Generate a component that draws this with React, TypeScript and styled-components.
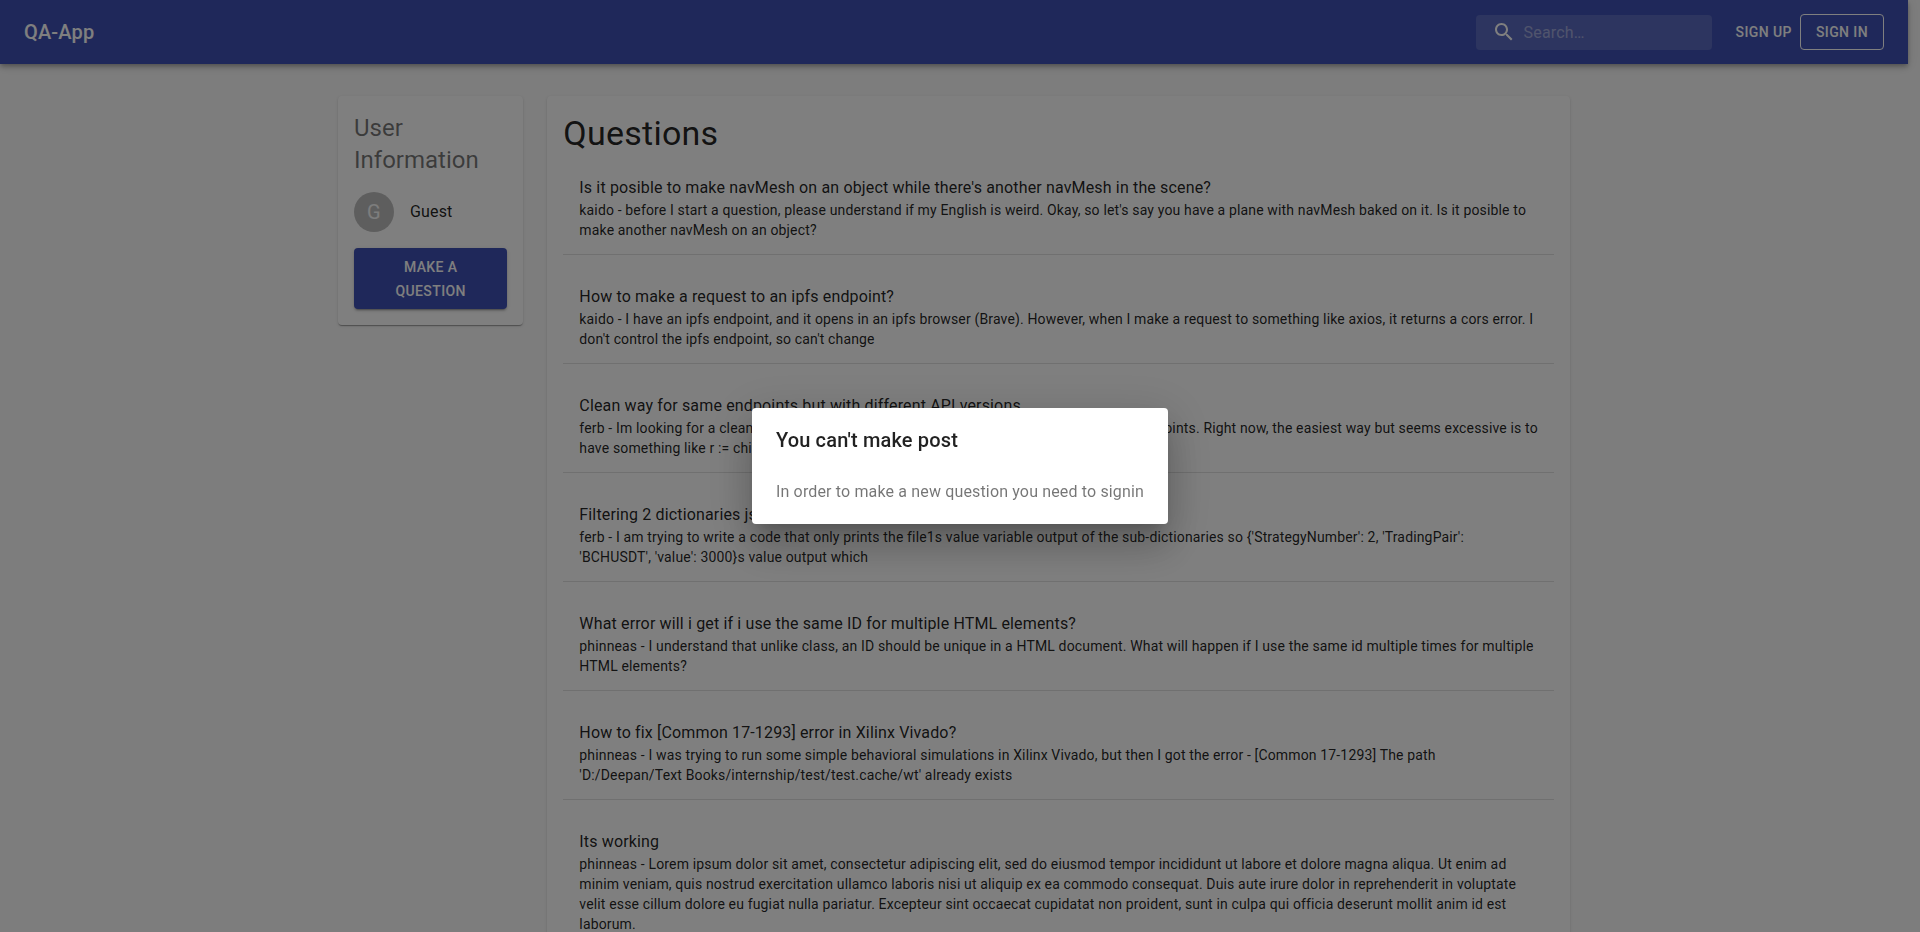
import React from "react";
import styled, { createGlobalStyle, css } from "styled-components";

const GlobalStyle = createGlobalStyle`
  *, *::before, *::after { box-sizing: border-box; }
  body {
    margin: 0;
    background: #fafafa;
    color: rgba(0, 0, 0, 0.87);
    font-family: Roboto, "Helvetica Neue", Arial, sans-serif;
    font-size: 16px;
    line-height: 24px;
    letter-spacing: 0.00938em;
    -webkit-font-smoothing: antialiased;
  }
`;

/* Scrolling is locked while the dialog is open; the padding keeps the scrollbar's room. */
const Page = styled.div`
  height: 100vh;
  overflow: hidden;
  padding-right: 12px;
`;

const AppBar = styled.header`
  position: relative;
  display: flex;
  align-items: center;
  min-height: 64px;
  padding: 0 24px;
  background: #3f51b5;
  color: #fff;
  box-shadow: 0 2px 4px -1px rgba(0, 0, 0, 0.2), 0 4px 5px 0 rgba(0, 0, 0, 0.14),
    0 1px 10px 0 rgba(0, 0, 0, 0.12);
`;

const Brand = styled.a`
  flex: 1;
  color: inherit;
  text-decoration: none;
  font-size: 20px;
  font-weight: 500;
  line-height: 32px;
  letter-spacing: 0.0075em;
`;

const SearchBox = styled.label`
  display: flex;
  align-items: center;
  gap: 8px;
  width: 236px;
  height: 35px;
  margin-right: 16px;
  padding-left: 16px;
  border-radius: 4px;
  background: rgba(255, 255, 255, 0.15);
`;

const SearchSvg = styled.svg`
  flex: none;
  width: 24px;
  height: 24px;
  fill: currentColor;
`;

const SearchInput = styled.input`
  flex: 1;
  min-width: 0;
  height: 100%;
  padding: 0;
  border: 0;
  outline: 0;
  background: transparent;
  color: inherit;
  font: inherit;
  letter-spacing: inherit;
  &::placeholder {
    color: currentColor;
    opacity: 0.42;
  }
`;

type Variant = "text" | "outlined" | "contained";

const variants = {
  text: css`
    padding: 6px 8px;
    background: transparent;
    color: inherit;
  `,
  outlined: css`
    padding: 5px 15px;
    border: 1px solid currentColor;
    background: transparent;
    color: inherit;
  `,
  contained: css`
    width: 100%;
    min-height: 61px;
    padding: 6px 16px;
    background: #3f51b5;
    color: #fff;
    box-shadow: 0 3px 1px -2px rgba(0, 0, 0, 0.2), 0 2px 2px 0 rgba(0, 0, 0, 0.14),
      0 1px 5px 0 rgba(0, 0, 0, 0.12);
  `,
};

const Button = styled.button<{ $variant: Variant }>`
  min-width: 64px;
  border: 0;
  border-radius: 4px;
  font-family: inherit;
  font-size: 14px;
  font-weight: 500;
  line-height: 24px;
  letter-spacing: 0.02857em;
  text-transform: uppercase;
  cursor: pointer;
  ${({ $variant }) => variants[$variant]}
`;

const Container = styled.main`
  display: grid;
  grid-template-columns: repeat(12, minmax(0, 1fr));
  align-items: start;
  gap: 24px;
  max-width: 1280px;
  margin: 32px auto 0;
  padding: 0 24px;
`;

const Paper = styled.section<{ $span: number }>`
  grid-column: span ${({ $span }) => $span};
  padding: 16px;
  border-radius: 4px;
  background: #fff;
  box-shadow: 0 2px 1px -1px rgba(0, 0, 0, 0.2), 0 1px 1px 0 rgba(0, 0, 0, 0.14),
    0 1px 3px 0 rgba(0, 0, 0, 0.12);
`;

const UserPanel = styled(Paper)`
  display: flex;
  flex-direction: column;
  gap: 16px;
`;

const PanelTitle = styled.h2`
  margin: 0;
  color: rgba(0, 0, 0, 0.54);
  font-size: 24px;
  font-weight: 400;
  line-height: 32px;
  letter-spacing: 0;
`;

const UserRow = styled.div`
  display: flex;
  align-items: center;
  gap: 16px;
`;

const Avatar = styled.span`
  display: flex;
  align-items: center;
  justify-content: center;
  width: 40px;
  height: 40px;
  border-radius: 50%;
  background: #bdbdbd;
  color: #fafafa;
  font-size: 20px;
`;

const Heading = styled.h1`
  margin: 0;
  font-size: 34px;
  font-weight: 400;
  line-height: 42px;
  letter-spacing: 0.00735em;
`;

const QuestionList = styled.ul`
  display: flex;
  flex-direction: column;
  gap: 16px;
  margin: 0;
  padding: 8px 0;
  list-style: none;
`;

const QuestionItem = styled.li`
  border-bottom: 1px solid rgba(0, 0, 0, 0.12);
`;

const QuestionLink = styled.a`
  display: block;
  padding: 14px 16px;
  color: inherit;
  text-decoration: none;
`;

const QuestionTitle = styled.span`
  display: block;
`;

const QuestionBody = styled.p`
  margin: 0;
  font-size: 14px;
  line-height: 20px;
  letter-spacing: 0.01071em;
`;

const Backdrop = styled.div`
  position: fixed;
  inset: 0;
  display: flex;
  align-items: center;
  justify-content: center;
  background: rgba(0, 0, 0, 0.5);
`;

const Dialog = styled.div`
  max-width: 600px;
  margin: 32px;
  border-radius: 4px;
  background: #fff;
  box-shadow: 0 11px 15px -7px rgba(0, 0, 0, 0.2), 0 24px 38px 3px rgba(0, 0, 0, 0.14),
    0 9px 46px 8px rgba(0, 0, 0, 0.12);
`;

const DialogTitle = styled.h2`
  margin: 0;
  padding: 16px 24px;
  font-size: 20px;
  font-weight: 500;
  line-height: 32px;
  letter-spacing: 0.0075em;
`;

const DialogText = styled.p`
  margin: 0;
  padding: 8px 24px 20px;
  color: rgba(0, 0, 0, 0.54);
`;

interface Question {
  title: string;
  author: string;
  body: string;
}

const questions: Question[] = [
  {
    title: "Is it posible to make navMesh on an object while there's another navMesh in the scene?",
    author: "kaido",
    body: "before I start a question, please understand if my English is weird. Okay, so let's say you have a plane with navMesh baked on it. Is it posible to make another navMesh on an object?",
  },
  {
    title: "How to make a request to an ipfs endpoint?",
    author: "kaido",
    body: "I have an ipfs endpoint, and it opens in an ipfs browser (Brave). However, when I make a request to something like axios, it returns a cors error. I don't control the ipfs endpoint, so can't change",
  },
  {
    title: "Clean way for same endpoints but with different API versions",
    author: "ferb",
    body: "Im looking for a clean way to have some different API versions but with the same endpoints. Right now, the easiest way but seems excessive is to have something like r := chi.NewRouter()",
  },
  {
    title: "Filtering 2 dictionaries json",
    author: "ferb",
    body: "I am trying to write a code that only prints the file1s value variable output of the sub-dictionaries so {'StrategyNumber': 2, 'TradingPair': 'BCHUSDT', 'value': 3000}s value output which",
  },
  {
    title: "What error will i get if i use the same ID for multiple HTML elements?",
    author: "phinneas",
    body: "I understand that unlike class, an ID should be unique in a HTML document. What will happen if I use the same id multiple times for multiple HTML elements?",
  },
  {
    title: "How to fix [Common 17-1293] error in Xilinx Vivado?",
    author: "phinneas",
    body: "I was trying to run some simple behavioral simulations in Xilinx Vivado, but then I got the error - [Common 17-1293] The path 'D:/Deepan/Text Books/internship/test/test.cache/wt' already exists",
  },
  {
    title: "Its working",
    author: "phinneas",
    body: "Lorem ipsum dolor sit amet, consectetur adipiscing elit, sed do eiusmod tempor incididunt ut labore et dolore magna aliqua. Ut enim ad minim veniam, quis nostrud exercitation ullamco laboris nisi ut aliquip ex ea commodo consequat. Duis aute irure dolor in reprehenderit in voluptate velit esse cillum dolore eu fugiat nulla pariatur. Excepteur sint occaecat cupidatat non proident, sunt in culpa qui officia deserunt mollit anim id est laborum.",
  },
];

export default function App() {
  return (
    <>
      <GlobalStyle />
      <Page>
        <AppBar>
          <Brand href="#">QA-App</Brand>
          <SearchBox>
            <SearchSvg viewBox="0 0 24 24" aria-hidden="true">
              <path d="M15.5 14h-.79l-.28-.27C15.41 12.59 16 11.11 16 9.5 16 5.91 13.09 3 9.5 3S3 5.91 3 9.5 5.91 16 9.5 16c1.61 0 3.09-.59 4.23-1.57l.27.28v.79l5 4.99L20.49 19l-4.99-5zm-6 0C7.01 14 5 11.99 5 9.5S7.01 5 9.5 5 14 7.01 14 9.5 11.99 14 9.5 14z" />
            </SearchSvg>
            <SearchInput type="text" placeholder="Search…" aria-label="Search" />
          </SearchBox>
          <Button type="button" $variant="text">Sign up</Button>
          <Button type="button" $variant="outlined">Sign in</Button>
        </AppBar>
        <Container>
          <UserPanel $span={2}>
            <PanelTitle>User Information</PanelTitle>
            <UserRow>
              <Avatar>G</Avatar>
              <span>Guest</span>
            </UserRow>
            <Button type="button" $variant="contained">Make a question</Button>
          </UserPanel>
          <Paper $span={10}>
            <Heading>Questions</Heading>
            <QuestionList>
              {questions.map((q) => (
                <QuestionItem key={q.title}>
                  <QuestionLink href="#">
                    <QuestionTitle>{q.title}</QuestionTitle>
                    <QuestionBody>
                      {q.author} - {q.body}
                    </QuestionBody>
                  </QuestionLink>
                </QuestionItem>
              ))}
            </QuestionList>
          </Paper>
        </Container>
      </Page>
      <Backdrop>
        <Dialog role="dialog" aria-modal="true" aria-labelledby="dialog-title" aria-describedby="dialog-text">
          <DialogTitle id="dialog-title">You can't make post</DialogTitle>
          <DialogText id="dialog-text">In order to make a new question you need to signin</DialogText>
        </Dialog>
      </Backdrop>
    </>
  );
}
